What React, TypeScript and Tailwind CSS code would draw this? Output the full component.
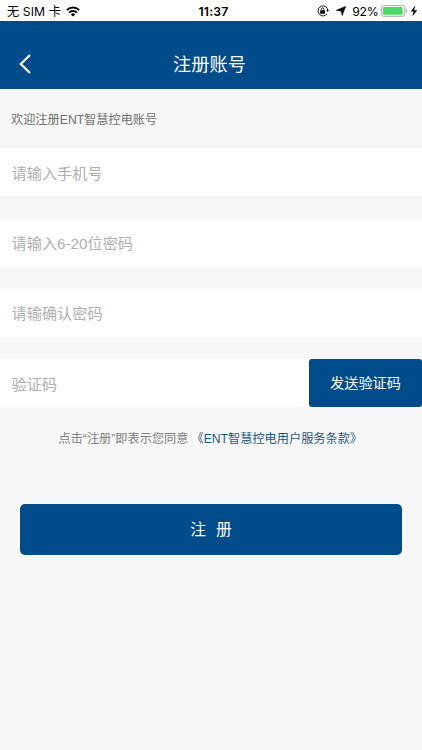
import { useState } from "react"

type FieldProps = {
    placeholder: string;
    type?: string;
}

const Field = ({ placeholder, type = "text" }: FieldProps) => {
    const [value, setValue] = useState("")
    return (
        <input
            className="block h-[47.8px] w-full min-w-0 bg-white pl-[11.5px] pt-[2px] text-[15.2px] text-[#333] outline-none placeholder:text-[#afafaf]"
            type={type}
            value={value}
            placeholder={placeholder}
            onChange={(e) => setValue(e.target.value)}
        />
    )
}

const StatusBar = () => {
    return (
        <div className="grid h-[20.7px] grid-cols-3 items-center bg-white pt-[1.5px] text-[12.2px] leading-[19px] text-black">
            <div className="flex items-center gap-[5px] pl-[7px]">
                <span className="whitespace-pre tracking-[0.1px]">无 SIM 卡</span>
                <svg width="14" height="11" viewBox="0 0 14 11" fill="none" stroke="#000" strokeWidth="1.9">
                    <path d="M.8 4.1a8.8 8.8 0 0 1 12.4 0" />
                    <path d="M3 6.6a5.7 5.7 0 0 1 8 0" />
                    <path d="M7 10.6 4.8 8.4a3.1 3.1 0 0 1 4.4 0Z" fill="#000" stroke="none" />
                </svg>
            </div>
            <div className="pl-[5px] text-center font-semibold tracking-[0.2px]">11:37</div>
            <div className="flex items-center justify-end pr-[3px]">
                <svg className="mr-[7px]" width="12" height="12" viewBox="0 0 12 12" fill="none" stroke="#000">
                    <path d="M10.1 3A5 5 0 1 0 10 9M10.7 5.2a5 5 0 0 0-1.1-2.8" strokeWidth=".9" />
                    <path d="M9.3 5h2.7l-1.35 2Z" fill="#000" stroke="none" />
                    <rect x="3.2" y="5.2" width="4.8" height="3.6" rx=".4" fill="#000" stroke="none" />
                    <path d="M4.3 5.3V4.2a1.3 1.3 0 0 1 2.6 0v1.1" strokeWidth=".8" />
                </svg>
                <svg className="mr-[6px]" width="10" height="10" viewBox="0 0 10 10">
                    <path d="M9.8.2 6.2 9.8 5 5.2.1 4.2Z" stroke="#000" strokeWidth=".4" />
                </svg>
                <span className="mr-[2.5px] tracking-[-0.2px]">92%</span>
                <svg width="38" height="12" viewBox="0 0 38 12">
                    <rect x=".5" y=".5" width="23.4" height="10.8" rx="2.4" fill="#fff" stroke="#999" strokeWidth=".8" />
                    <rect x="2" y="2" width="19.6" height="7.8" rx="1.2" fill="#4cd964" />
                    <path d="M25 4.2q1.2.5 1.2 1.7T25 7.6Z" fill="#999" />
                    <path d="M34.4.6 29.6 6.6h3l-1.3 4.8 4.9-6.2h-3Z" />
                </svg>
            </div>
        </div>
    )
}

const App = () => {
    return (
        <main className="flex min-h-[750px] flex-col bg-[#f7f7f7] font-['Liberation_Sans','Noto_Sans_CJK_SC',sans-serif]">
            <div className="font-[Inter,'Noto_Sans_CJK_SC',sans-serif]">
                <StatusBar />
            </div>

            <header className="grid h-[68.8px] grid-cols-[60px_1fr_60px] items-center bg-[#004b8a] pt-[17px] text-white">
                <button className="pl-[19px]" aria-label="返回">
                    <svg width="12" height="20" viewBox="0 0 12 20" fill="none" stroke="currentColor" strokeWidth="2.2">
                        <path d="M11 1 1.8 10l9.2 9" />
                    </svg>
                </button>
                <h1 className="pr-[3px] pt-[3px] text-center text-[18.2px] leading-6">注册账号</h1>
            </header>

            <p className="h-[59px] pl-[11px] pt-[21px] text-[12.2px] leading-5 text-[#707070]">欢迎注册ENT智慧控电账号</p>

            <form className="flex flex-col" onSubmit={(e) => e.preventDefault()}>
                <div className="flex flex-col gap-[22.5px]">
                    <Field placeholder="请输入手机号" type="tel" />
                    <Field placeholder="请输入6-20位密码" type="password" />
                    <Field placeholder="请输确认密码" type="password" />
                    <div className="flex">
                        <Field placeholder="验证码" />
                        <button type="button" className="h-[47.8px] w-[113px] shrink-0 rounded-[3px] bg-[#004b8a] text-[14.2px] text-white">
                            发送验证码
                        </button>
                    </div>
                </div>

                <p className="mt-[21.5px] flex h-5 items-center pl-[58.5px] text-[12.2px] whitespace-nowrap text-[#808080]">
                    <span>点击“注册”即表示您同意</span>
                    <a className="ml-[3px] text-[#1d5689]" href="#">《ENT智慧控电用户服务条款》</a>
                </p>

                <button type="submit" className="mx-5 mt-[55px] flex h-[51px] items-center justify-center gap-[10px] rounded-[5px] bg-[#004b8a] pt-[2px] text-[15.8px] text-white">
                    <span>注</span>
                    <span>册</span>
                </button>
            </form>
        </main>
    )
}

export default App
